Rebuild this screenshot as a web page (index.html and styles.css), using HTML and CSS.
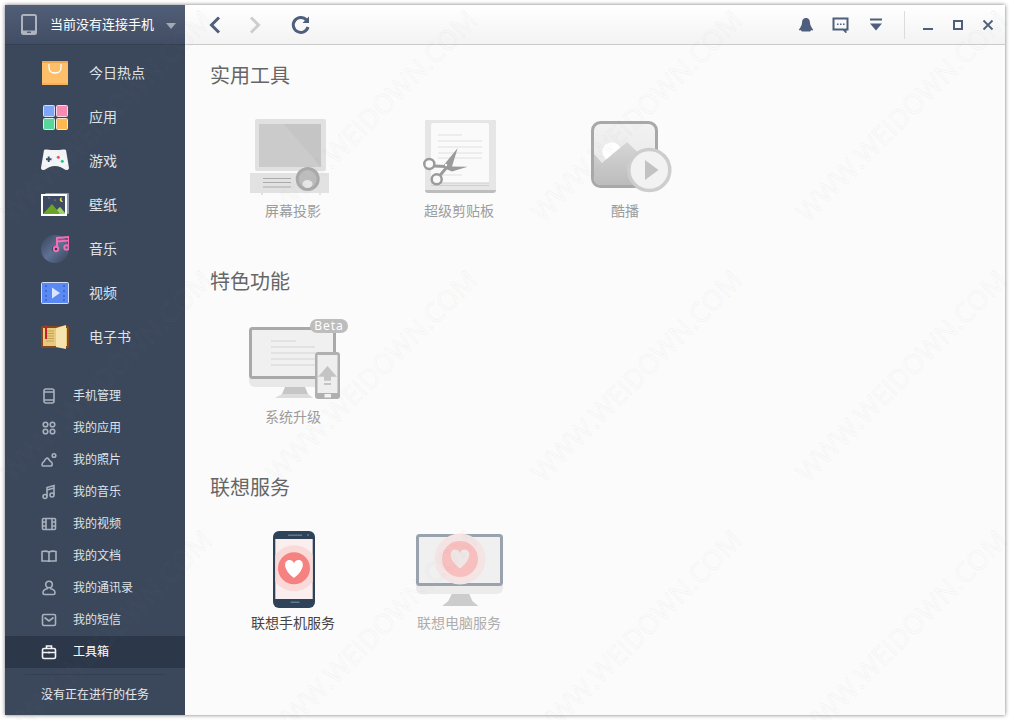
FILE: index.html
```html
<!DOCTYPE html>
<html lang="zh-CN">
<head>
    <meta charset="UTF-8">
    <title>联想手机助手 - 工具箱</title>
    <link rel="stylesheet" href="styles.css">
</head>
<body>
    <div class="window">
        <aside class="sidebar">
            <div class="device">
                <svg class="device-icon" viewBox="0 0 16 21"><rect x="1" y="1" width="14" height="19" rx="1.5" fill="none" stroke="#aeb3bd" stroke-width="2"/><rect x="1" y="16.5" width="14" height="3.5" fill="#aeb3bd"/><rect x="6" y="17.6" width="4" height="1.3" fill="#4a566c"/></svg>
                <span class="device-name">当前没有连接手机</span>
                <span class="device-arrow"></span>
            </div>

            <ul class="nav">
                <li class="nav-item">
                    <svg class="nav-icon" viewBox="0 0 28 28"><rect x="1" y="2" width="26" height="24" rx="1.5" fill="#ffbe69"/><rect x="1" y="2" width="26" height="2" fill="#f0a84e"/><rect x="1" y="24" width="26" height="2" fill="#f5b25c"/><path d="M8 5v3.500c0 3.500 2.500 5.500 6 5.500s6-2 6-5.500V5" fill="none" stroke="#fff" stroke-width="1.300"/></svg>
                    <span>今日热点</span>
                </li>
                <li class="nav-item">
                    <svg class="nav-icon" viewBox="0 0 28 28"><rect x="2.500" y="2.500" width="11" height="11" rx="1" fill="#7fa5f8" stroke="#d5dff5"/><rect x="15.500" y="2.500" width="11" height="11" rx="1" fill="#f88bb2" stroke="#f5d8e4"/><rect x="2.500" y="15.500" width="11" height="11" rx="1" fill="#58d79b" stroke="#d5f0e4"/><rect x="15.500" y="15.500" width="11" height="11" rx="1" fill="#fdb94f" stroke="#f5e8d0"/></svg>
                    <span>应用</span>
                </li>
                <li class="nav-item">
                    <svg class="nav-icon" viewBox="0 0 28 28"><path d="M3 3c3-1 5 0 7 0h8c2 0 4-1 7 0 1 6 2 12 3 18 0 2-3 3-5 1-2-1.500-5-3-9-3s-7 1.500-9 3c-2 2-5 1-5-1 1-6 2-12 3-18z" fill="#f4f5f7"/><path d="M7.700 9.500v5.500M5 12.200h5.500" stroke="#3f5068" stroke-width="1.900" fill="none"/><circle cx="17.300" cy="10.300" r="1.500" fill="#ef4f63"/><circle cx="21.300" cy="14.300" r="1.500" fill="#25c486"/></svg>
                    <span>游戏</span>
                </li>
                <li class="nav-item">
                    <svg class="nav-icon" viewBox="0 0 28 28"><rect x="4" y="2" width="24" height="21" rx="1" fill="#8d97a9"/><rect x="0" y="3" width="26" height="22" fill="#fff"/><rect x="2" y="5" width="22" height="18" fill="#3d4c63"/><path d="M2 23l9-10 5 6 3-3 5 6v1z" fill="#6aa528"/><path d="M16 19l3-3 5 6v1h-5z" fill="#a4cf70"/><path d="M21 6.500a2.200 2.200 0 1 0 1.200 4 2.800 2.800 0 0 1-1.200-4z" fill="#f2dd3c"/><circle cx="8" cy="7" r=".5" fill="#ccc"/><circle cx="14" cy="9" r=".5" fill="#ccc"/></svg>
                    <span>壁纸</span>
                </li>
                <li class="nav-item">
                    <svg class="nav-icon" viewBox="0 0 28 28"><defs><linearGradient id="disc" x1="0" y1="0" x2="1" y2="1"><stop offset="0" stop-color="#36425a"/><stop offset=".5" stop-color="#5f7193"/><stop offset="1" stop-color="#364259"/></linearGradient></defs><circle cx="14" cy="14" r="14" fill="url(#disc)"/><circle cx="14" cy="14" r="3" fill="#2f3a4e"/><path d="M16 13V3l12-1v10" fill="none" stroke="#f76db5" stroke-width="2"/><path d="M16 6.500l12-1" stroke="#f76db5" stroke-width="2"/><circle cx="15" cy="14" r="2.200" fill="none" stroke="#f76db5" stroke-width="2"/><circle cx="25.500" cy="12.500" r="2.200" fill="none" stroke="#f76db5" stroke-width="2"/></svg>
                    <span>音乐</span>
                </li>
                <li class="nav-item">
                    <svg class="nav-icon" viewBox="0 0 28 28"><rect x=".5" y="3.500" width="27" height="21" rx="1" fill="#5a89f4" stroke="#d3def6"/><path d="M4 6h2v2H4zM4 11h2v2H4zM4 16h2v2H4zM4 20h2v2H4zM22 6h2v2h-2zM22 11h2v2h-2zM22 16h2v2h-2zM22 20h2v2h-2z" fill="#3f6bd6"/><path d="M11 8.500l8 5.500-8 5.500z" fill="#d9e5ff"/></svg>
                    <span>视频</span>
                </li>
                <li class="nav-item">
                    <svg class="nav-icon" viewBox="0 0 28 28"><rect x="0" y="3" width="28" height="22" rx="1" fill="#86481c"/><rect x="2" y="5" width="24" height="18" fill="#e9ca7c"/><path d="M15 5l10-3v24l-10-2z" fill="#f5e4ae"/><path d="M5 8h8M5 10.500h8M5 13h8M5 15.500h8M5 18h8" stroke="#b9974f" stroke-width=".8"/><rect x="4" y="2" width="2" height="14" fill="#c6202c"/></svg>
                    <span>电子书</span>
                </li>
            </ul>

            <ul class="manage">
                <li class="manage-item">
                    <svg class="manage-icon" viewBox="0 0 16 16"><rect x="3" y="1" width="10" height="14" rx="2"/><path d="M3 4h10M3 12h10"/></svg>
                    <span>手机管理</span>
                </li>
                <li class="manage-item">
                    <svg class="manage-icon" viewBox="0 0 16 16"><circle cx="4.500" cy="4.500" r="2.300"/><circle cx="11.500" cy="4.500" r="2.300"/><circle cx="4.500" cy="11.500" r="2.300"/><circle cx="11.500" cy="11.500" r="2.300"/></svg>
                    <span>我的应用</span>
                </li>
                <li class="manage-item">
                    <svg class="manage-icon" viewBox="0 0 16 16"><path d="M1 13c0-2 1-3 2-3.500C4 7.500 5.500 6 6.500 6c1.500 1 2 2.500 3 3.500 2 .5 2.500 4 .5 4.500H2c-.7 0-1-.4-1-1z"/><circle cx="13" cy="3.500" r="1.800"/></svg>
                    <span>我的照片</span>
                </li>
                <li class="manage-item">
                    <svg class="manage-icon" viewBox="0 0 16 16"><path d="M6 12.500V3.500l7-2v9M6 6l7-2"/><circle cx="4" cy="12.500" r="2"/><circle cx="11" cy="11" r="2"/></svg>
                    <span>我的音乐</span>
                </li>
                <li class="manage-item">
                    <svg class="manage-icon" viewBox="0 0 16 16"><rect x="1.500" y="2.500" width="13" height="11" rx="1"/><path d="M5 2.500v11M11 2.500v11M1.500 6h3.500M1.500 10h3.500M11 6h3.500M11 10h3.500"/></svg>
                    <span>我的视频</span>
                </li>
                <li class="manage-item">
                    <svg class="manage-icon" viewBox="0 0 16 16"><path d="M8 4C6 3 3 3 1 3.500v9.500h5c1 0 2 .5 2 1 0-.5 1-1 2-1h5V3.500C13 3 10 3 8 4zM8 4v10"/></svg>
                    <span>我的文档</span>
                </li>
                <li class="manage-item">
                    <svg class="manage-icon" viewBox="0 0 16 16"><circle cx="8" cy="4.500" r="3.300"/><path d="M7 8.500C4 9 2 11 2 13c0 1 .5 1.500 1.500 1.500h9c1 0 1.500-.5 1.500-1.500 0-2-2-4-5-4.500"/></svg>
                    <span>我的通讯录</span>
                </li>
                <li class="manage-item">
                    <svg class="manage-icon" viewBox="0 0 16 16"><rect x="1.500" y="2.500" width="13" height="11" rx="1.500"/><path d="M3.500 5.500L8 9l4.500-3.500"/></svg>
                    <span>我的短信</span>
                </li>
                <li class="manage-item active">
                    <svg class="manage-icon" viewBox="0 0 16 16"><rect x="1.500" y="4.500" width="13" height="10" rx="1.500"/><path d="M5.500 4.500V2h5v2.500M1.500 8.500h13M8 7.500v2"/></svg>
                    <span>工具箱</span>
                </li>
            </ul>

            <div class="tasks">没有正在进行的任务</div>
        </aside>

        <div class="main">
            <div class="topbar">
                <button class="bar-btn nav-btn"><svg width="14" height="18" viewBox="0 0 14 18"><path d="M11 1.500L3.500 9l7.500 7.500" fill="none" stroke="#4d5f7c" stroke-width="3"/></svg></button>
                <button class="bar-btn nav-btn"><svg width="14" height="18" viewBox="0 0 14 18"><path d="M3 1.500L10.500 9 3 16.500" fill="none" stroke="#cdcdcd" stroke-width="3"/></svg></button>
                <button class="bar-btn nav-btn refresh"><svg width="20" height="20" viewBox="0 0 20 20"><path d="M15.500 5A7.500 7.500 0 1 0 17 12" fill="none" stroke="#4d5f7c" stroke-width="3"/><path d="M18 1.500V8h-6.500z" fill="#4d5f7c"/></svg></button>

                <div class="bar-right">
                    <button class="bar-btn tool-btn"><svg width="16" height="16" viewBox="0 0 16 16"><path d="M8 1C5 1 4 3.500 4 6c0 2-2 5-3 6.500-.5 1 1 1.200 2 .5 0 1 1 1.500 2 1.500h6c1 0 2-.5 2-1.500 1 .7 2.500.5 2-.5C14 11 12 8 12 6c0-2.500-1-5-4-5z" fill="#4d5f7c"/></svg></button>
                    <button class="bar-btn tool-btn"><svg width="17" height="16" viewBox="0 0 17 16"><path d="M1.500 1.500h14v11h-2v2l-2-2h-10z" fill="none" stroke="#4d5f7c" stroke-width="2"/><path d="M5 6.500h1.500V8H5zM8 6.500h1.500V8H8zM11 6.500h1.500V8H11z" fill="#4d5f7c"/></svg></button>
                    <button class="bar-btn tool-btn"><svg width="14" height="14" viewBox="0 0 14 14"><path d="M1 1.500h12" stroke="#4d5f7c" stroke-width="2"/><path d="M1 5.500h12L7 12.500z" fill="#4d5f7c"/></svg></button>
                    <span class="bar-sep"></span>
                    <button class="bar-btn win-btn"><svg width="12" height="12" viewBox="0 0 12 12"><path d="M1 10h10" stroke="#4d5f7c" stroke-width="2"/></svg></button>
                    <button class="bar-btn win-btn"><svg width="12" height="12" viewBox="0 0 12 12"><rect x="2" y="2" width="8" height="8" fill="none" stroke="#4d5f7c" stroke-width="2"/></svg></button>
                    <button class="bar-btn win-btn"><svg width="12" height="12" viewBox="0 0 12 12"><path d="M1.500 1.500l9 9M10.500 1.500l-9 9" stroke="#4d5f7c" stroke-width="1.800"/></svg></button>
                </div>
            </div>

            <div class="content">
                <section class="section">
                    <h2>实用工具</h2>
                    <div class="tools">
                        <div class="tool">
                            <svg class="tool-icon" viewBox="243 110 100 90">
                                <rect x="255" y="119" width="71" height="52" rx="2" fill="#e1e1e1"/>
                                <rect x="259" y="124" width="62" height="43" fill="#c5c5c5"/>
                                <path d="M259 124h25l37 43h-62z" fill="#cbcbcb"/>
                                <rect x="250" y="173" width="79" height="20" fill="#e2e2e2"/>
                                <path d="M261 193h2v2h-2zM319 193h2v2h-2z" fill="#e2e2e2"/>
                                <path d="M263 178.500h28M263 182.500h28M263 187h28" stroke="#ababab" stroke-width="1.200"/>
                                <circle cx="307.700" cy="179" r="12" fill="#a9a9a9"/>
                                <circle cx="307.700" cy="179" r="9" fill="#bdbdbd"/>
                                <ellipse cx="307.500" cy="184" rx="5" ry="4" fill="#e6e6e6"/>
                            </svg>
                            <span class="tool-label">屏幕投影</span>
                        </div>
                        <div class="tool">
                            <svg class="tool-icon" viewBox="409 110 100 90">
                                <rect x="425" y="120" width="71" height="73" rx="3" fill="#bdbdbd"/>
                                <path d="M425 123a3 3 0 0 1 3-3h65a3 3 0 0 1 3 3v67h-71z" fill="#e6e6e6"/>
                                <rect x="431" y="123" width="58" height="60" rx="2" fill="#fafafa"/>
                                <path d="M431 183h58M431 185.500h58" stroke="#cfcfcf"/>
                                <path d="M438 135h24M438 141h44M438 147h44M438 153h44M438 158h44M438 175h24" stroke="#ededed" stroke-width="2"/>
                                <path d="M433.500 166l12.500 .5M439.500 176l7.500-9" stroke="#9b9b9b" stroke-width="3" fill="none"/>
                                <circle cx="429.300" cy="164" r="5" fill="#fafafa" stroke="#9b9b9b" stroke-width="2.500"/>
                                <circle cx="436.700" cy="179.300" r="5" fill="#fafafa" stroke="#9b9b9b" stroke-width="2.500"/>
                                <path d="M443 166L457.700 148 452 166.500 467.700 166.700 452 171.500 446 169z" fill="#9b9b9b"/>
                                <circle cx="446" cy="165" r="1.200" fill="#fff"/>
                            </svg>
                            <span class="tool-label">超级剪贴板</span>
                        </div>
                        <div class="tool">
                            <svg class="tool-icon" viewBox="575 110 100 90">
                                <defs>
                                    <linearGradient id="kubo" x1="0" y1="0" x2="0" y2="1"><stop offset="0" stop-color="#f2f2f2"/><stop offset="1" stop-color="#e6e6e6"/></linearGradient>
                                    <linearGradient id="hill" x1="0" y1="0" x2="0" y2="1"><stop offset="0" stop-color="#d6d6d6"/><stop offset="1" stop-color="#bcbcbc"/></linearGradient>
                                </defs>
                                <rect x="592.500" y="122.500" width="64" height="64" rx="8" fill="url(#kubo)"/>
                                <circle cx="611.700" cy="151.700" r="9.500" fill="#fff"/>
                                <path d="M594 154l8 9 25-21 28 27v9a7 7 0 0 1-7 7h-47a7 7 0 0 1-7-7z" fill="url(#hill)"/>
                                <rect x="592.500" y="122.500" width="64" height="64" rx="8" fill="none" stroke="#a8a8a8" stroke-width="3"/>
                                <circle cx="649.300" cy="170" r="20.500" fill="#f2f2f2" stroke="#cdcdcd" stroke-width="3.500"/>
                                <path d="M645 160l13.500 10-13.500 10z" fill="#c2c2c2"/>
                            </svg>
                            <span class="tool-label">酷播</span>
                        </div>
                    </div>
                </section>

                <section class="section">
                    <h2>特色功能</h2>
                    <div class="tools">
                        <div class="tool">
                            <div class="tool-pic">
                                <svg class="tool-icon" viewBox="243 316 100 90">
                                    <path d="M249 378v3a6 6 0 0 0 6 6h75a6 6 0 0 0 6-6v-3z" fill="#e8e8e8"/>
                                    <path d="M285 387h20l3 7h-26z" fill="#c6c6c6"/>
                                    <path d="M282 394h26l5 4h-38z" fill="#dcdcdc"/>
                                    <rect x="250.500" y="328.500" width="84" height="49" rx="2" fill="#f0f0f0" stroke="#a9a9a9" stroke-width="3"/>
                                    <path d="M271 341h25M271 347h44M271 353h44M271 359h44M271 365h44" stroke="#e2e2e2" stroke-width="2"/>
                                    <rect x="315" y="352" width="25" height="47" rx="3" fill="#b0b0b0"/>
                                    <rect x="317.500" y="355" width="20" height="38" fill="#eeeeee"/>
                                    <path d="M327.500 366l9.500 10.700h-6v4h-7v-4h-6z" fill="#c4c4c4"/>
                                    <rect x="324" y="383" width="7" height="2" fill="#c4c4c4"/>
                                    <rect x="324.500" y="394" width="6.500" height="3.500" fill="#f2f2f2"/>
                                </svg>
                                <span class="beta">Beta</span>
                            </div>
                            <span class="tool-label">系统升级</span>
                        </div>
                    </div>
                </section>

                <section class="section">
                    <h2>联想服务</h2>
                    <div class="tools">
                        <div class="tool">
                            <svg class="tool-icon" viewBox="243 522 100 90">
                                <defs><clipPath id="phone-screen"><rect x="275.300" y="539" width="37.400" height="60"/></clipPath></defs>
                                <rect x="273" y="531" width="42" height="77" rx="6" fill="#2f4358"/>
                                <rect x="275.300" y="539" width="37.400" height="60" fill="#fbeeee"/>
                                <circle cx="294" cy="568.300" r="23" fill="#fad9d9" clip-path="url(#phone-screen)"/>
                                <circle cx="294" cy="568.300" r="16" fill="#f58181"/>
                                <path d="M0 .95C-1.250 0-1.050-.95-.5-.95-.2-.95 0-.75 0-.55 0-.75.2-.95.5-.95 1.050-.95 1.250 0 0 .95z" transform="translate(294 569) scale(9.500)" fill="#fff"/>
                                <rect x="288" y="534.500" width="14" height="1.500" fill="#66768a"/>
                                <circle cx="308" cy="535" r="1" fill="#66768a"/>
                                <rect x="290.500" y="601.500" width="9" height="1.500" fill="#66768a"/>
                            </svg>
                            <span class="tool-label strong">联想手机服务</span>
                        </div>
                        <div class="tool">
                            <svg class="tool-icon" viewBox="409 522 100 90">
                                <path d="M416 585v3a6 6 0 0 0 6 6h75a6 6 0 0 0 6-6v-3z" fill="#ebebeb"/>
                                <path d="M451.700 594h17.600l3 7 6 5h-36l6-5z" fill="#cccccc"/>
                                <rect x="417.500" y="535.500" width="84" height="49" rx="2" fill="#f0f0f0" stroke="#9aa3ad" stroke-width="3"/>
                                <circle cx="460" cy="559" r="25.500" fill="#f4e4e4"/>
                                <circle cx="460" cy="559" r="18" fill="#f8bfbf"/>
                                <path d="M0 .95C-1.250 0-1.050-.95-.5-.95-.2-.95 0-.75 0-.55 0-.75.2-.95.5-.95 1.050-.95 1.250 0 0 .95z" transform="translate(460 559) scale(10)" fill="#efe6e6"/>
                            </svg>
                            <span class="tool-label faint">联想电脑服务</span>
                        </div>
                    </div>
                </section>
            </div>
        </div>
    </div>

    <!-- 水印 -->
    <div class="watermark">
        <div class="watermark-grid">
            <span>WWW.WEIDOWN.COM</span><span>WWW.WEIDOWN.COM</span><span>WWW.WEIDOWN.COM</span><span>WWW.WEIDOWN.COM</span>
            <span>WWW.WEIDOWN.COM</span><span>WWW.WEIDOWN.COM</span><span>WWW.WEIDOWN.COM</span><span>WWW.WEIDOWN.COM</span>
            <span>WWW.WEIDOWN.COM</span><span>WWW.WEIDOWN.COM</span><span>WWW.WEIDOWN.COM</span><span>WWW.WEIDOWN.COM</span>
        </div>
    </div>
</body>
</html>
```

FILE: styles.css
```css
* {
    margin: 0;
    padding: 0;
    box-sizing: border-box;
}

html, body {
    height: 720px;
    overflow: hidden;
}

body {
    background: #fff;
    font-family: "Noto Sans CJK SC", "Liberation Sans", sans-serif;
    padding: 5px;
    position: relative;
}

ul {
    list-style: none;
}

.window {
    display: flex;
    width: 1000px;
    height: 710px;
    box-shadow: 0 0 4px rgba(0, 0, 0, 0.55);
}

/* 左侧栏 */
.sidebar {
    width: 180px;
    background: #3b475b;
    color: #dfe3e8;
    display: flex;
    flex-direction: column;
}

.device {
    height: 40px;
    display: flex;
    align-items: center;
    padding-left: 16px;
    background: linear-gradient(#515e77, #414d64);
    border-bottom: 1px solid #343f52;
}

.device-icon {
    width: 16px;
    height: 21px;
    margin-right: 13px;
}

.device-name {
    font-size: 13px;
    color: #fff;
    margin-bottom: 2px;
}

.device-arrow {
    margin-left: 12px;
    margin-top: 2px;
    border-left: 5px solid transparent;
    border-right: 5px solid transparent;
    border-top: 6px solid #a2a8b4;
}

.nav {
    padding-top: 6px;
}

.nav-item {
    height: 44px;
    display: flex;
    align-items: center;
    gap: 20px;
    padding-left: 36px;
    font-size: 14px;
}

.nav-item span {
    margin-bottom: 2px;
}

.nav-icon {
    width: 28px;
    height: 28px;
    flex: none;
}

.manage {
    margin-top: 21px;
}

.manage-item {
    height: 32px;
    display: flex;
    align-items: center;
    gap: 16px;
    padding-left: 36px;
    font-size: 12px;
}

.manage-item span {
    margin-bottom: 3px;
}

.manage-icon {
    width: 16px;
    height: 16px;
    flex: none;
    fill: none;
    stroke: #a9b1bd;
    stroke-width: 1.6;
}

.manage-item.active {
    background: #2d374a;
    color: #fff;
}

.manage-item.active .manage-icon {
    stroke: #f2f3f5;
}

.tasks {
    margin-top: 6px;
    margin-left: 20px;
    margin-right: 20px;
    padding: 10px 0 0 16px;
    border-top: 1px solid #343f52;
    font-size: 12px;
    line-height: 18px;
    color: #e6e9ed;
}

/* 主区域 */
.main {
    flex: 1;
    display: flex;
    flex-direction: column;
    background: #fbfbfb;
}

.topbar {
    height: 40px;
    display: flex;
    align-items: center;
    padding: 0 2px 0 10px;
    background: linear-gradient(#fff, #f3f3f3);
    border-bottom: 1px solid #cbcbcb;
}

.bar-btn {
    height: 39px;
    border: none;
    background: none;
    display: flex;
    align-items: center;
    justify-content: center;
}

.nav-btn {
    width: 40px;
}

.refresh {
    margin-left: 6px;
}

.bar-right {
    margin-left: auto;
    display: flex;
    align-items: center;
}

.tool-btn {
    width: 35px;
}

.win-btn {
    width: 30px;
}

.bar-sep {
    width: 1px;
    height: 28px;
    margin: 0 8px 0 11px;
    background: #dcdcdc;
}

.content {
    flex: 1;
    padding: 15px 0 0 25px;
}

.section {
    height: 206px;
}

.section h2 {
    font-size: 20px;
    font-weight: 400;
    line-height: 30px;
    color: #666;
}

.tools {
    display: flex;
    margin-top: 20px;
}

.tool {
    width: 166px;
    display: flex;
    flex-direction: column;
    align-items: center;
}

.tool-pic {
    position: relative;
    height: 90px;
}

.tool-icon {
    display: block;
    width: 100px;
    height: 90px;
}

.tool-label {
    font-size: 14px;
    line-height: 20px;
    color: #9c9c9c;
}

.tool-label.strong {
    color: #444;
}

.tool-label.faint {
    color: #adadad;
}

.beta {
    position: absolute;
    left: 67px;
    top: 3px;
    height: 14px;
    width: 38px;
    border-radius: 7px;
    background: #bdbdbd;
    color: #fff;
    font-family: "Noto Sans", sans-serif;
    font-size: 12px;
    line-height: 14px;
    letter-spacing: 1px;
    text-align: center;
}

/* 水印 */
.watermark {
    position: absolute;
    left: 0;
    top: 0;
    width: 1010px;
    height: 720px;
    overflow: hidden;
    pointer-events: none;
}

.watermark-grid {
    margin: -15px 0 0 -27px;
    display: grid;
    grid-template-columns: repeat(4, 265px);
    grid-auto-rows: 260px;
}

.watermark span {
    display: flex;
    align-items: center;
    justify-content: center;
    white-space: nowrap;
    transform: rotate(-45deg);
    font-family: "Open Sans", sans-serif;
    font-size: 27px;
    color: transparent;
    -webkit-text-stroke: 1px rgba(140, 140, 140, 0.07);
}
```
